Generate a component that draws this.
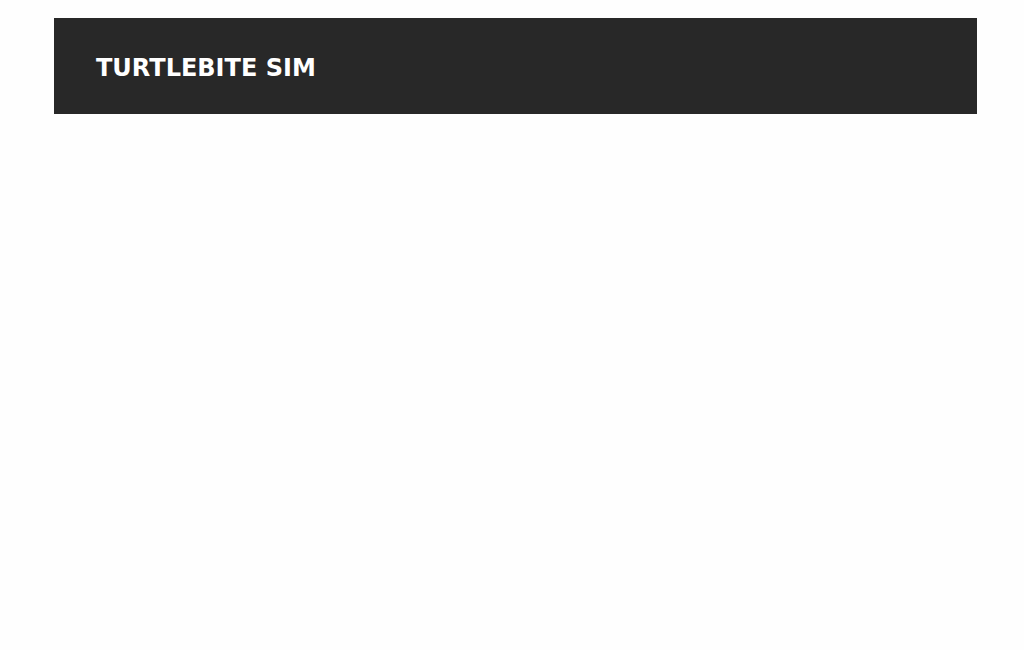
export default function App() {
  return (
    <div className="min-h-screen bg-[#fefefe] pt-[18px] pr-[47px] pl-[54px]">
      <header className="bg-[#282828] px-[42px] pt-[34px] pb-[30px]">
        <h1 className="font-['DejaVu_Sans',sans-serif] text-2xl leading-8 font-bold text-white">
          TURTLEBITE SIM
        </h1>
      </header>
    </div>
  );
}
